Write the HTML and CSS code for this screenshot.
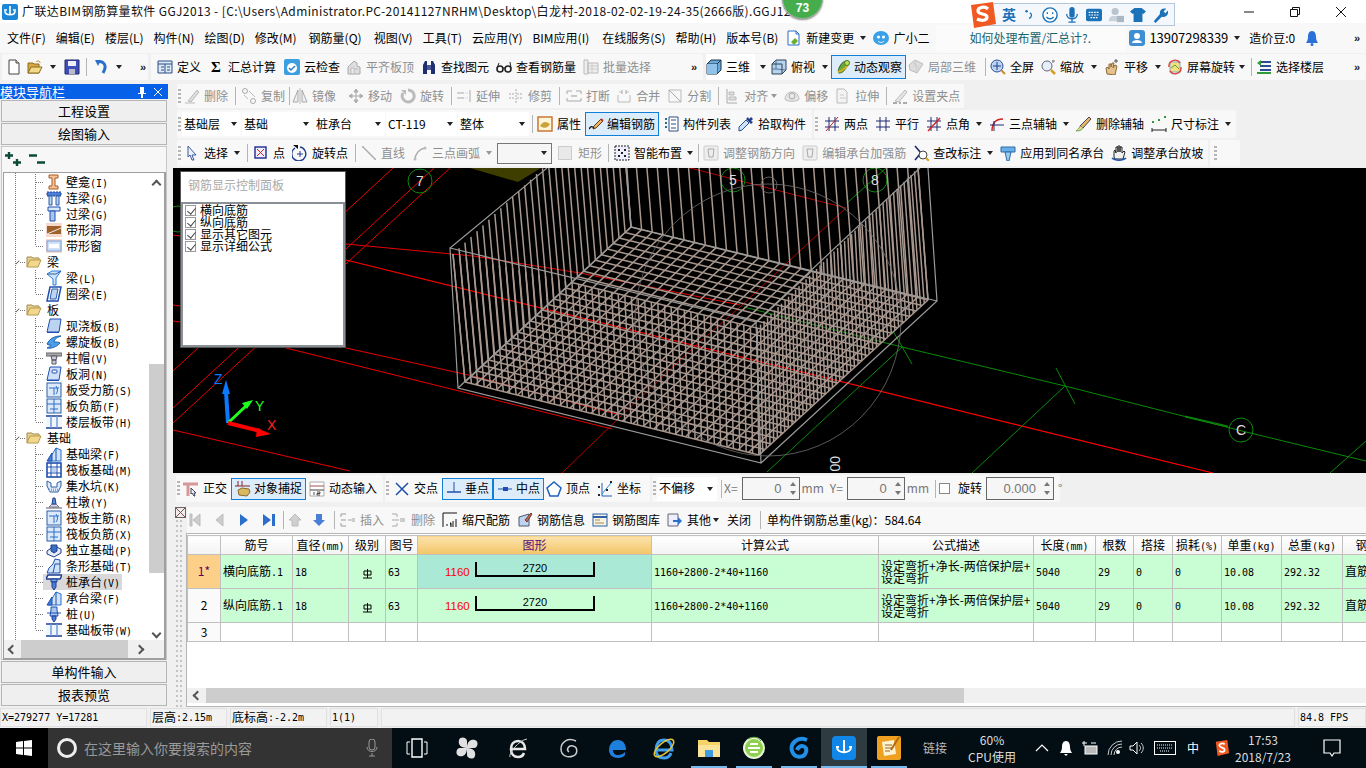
FILE: index.html
```html
<!DOCTYPE html>
<html lang="zh">
<head>
<meta charset="utf-8">
<title>广联达BIM钢筋算量软件</title>
<link rel="stylesheet" href="styles.css">
</head>
<body>
<svg class="defs" aria-hidden="true">
<symbol id="new" viewBox="0 0 16 16"><path d="M3 1h7l3 3v11H3z" fill="#fff" stroke="#444"/><path d="M10 1v3h3" fill="#ddd" stroke="#444"/></symbol>
<symbol id="open" viewBox="0 0 16 16"><path d="M1 14V4h5l1 1h5v9z" fill="#d9a93f" stroke="#8a6a20"/><path d="M1 14l3-6h11l-3 6z" fill="#f3d98a" stroke="#8a6a20"/><path d="M9 3c2-2 4-1 4 1" fill="none" stroke="#c08020"/></symbol>
<symbol id="save" viewBox="0 0 16 16"><path d="M1 1h14v14H1z" fill="#3f4fb8" stroke="#22276e"/><path d="M4 2h8v5H4z" fill="#eef"/><path d="M5 10h6v5H5z" fill="#bbc"/></symbol>
<symbol id="undo" viewBox="0 0 16 16"><path d="M3 3c6-2 11 3 6 11" fill="none" stroke="#2a6fc9" stroke-width="3"/><path d="M1 1l6 0-3 6z" fill="#2a6fc9"/></symbol>
<symbol id="def" viewBox="0 0 16 16"><path d="M1 2h14v12H1z" fill="#dce9f8" stroke="#2b4f85"/><path d="M1 5h14M8 5v9M4 8h3M4 11h3M10 8h3M10 11h3" stroke="#2b4f85"/></symbol>
<symbol id="cloud" viewBox="0 0 16 16"><rect width="16" height="16" rx="2" fill="#3c9fe2"/><circle cx="8" cy="9" r="5" fill="#fff"/><path d="M5 9l2 2 4-4" fill="none" stroke="#2b7cc2" stroke-width="1.5"/></symbol>
<symbol id="flush" viewBox="0 0 16 16"><path d="M2 15V8l6-6 3 2v3l3 1v7z" fill="#ddd" stroke="#aaa"/><path d="M5 9h3v6H5zM9 10h3" fill="#eee" stroke="#bbb"/></symbol>
<symbol id="bino" viewBox="0 0 16 16"><path d="M2 15V6l2-4h2v13zM14 15V6l-2-4h-2v13z" fill="#1d2f70"/><path d="M6 6h4v5H6z" fill="#4a5a98"/></symbol>
<symbol id="glass" viewBox="0 0 16 16"><circle cx="4" cy="10" r="3" fill="none" stroke="#222" stroke-width="1.6"/><circle cx="12" cy="10" r="3" fill="none" stroke="#222" stroke-width="1.6"/><path d="M7 9h2M1 9l2-5M15 9l-1-6" stroke="#222" fill="none"/></symbol>
<symbol id="batch" viewBox="0 0 16 16"><path d="M1 1h4v14H1zM5 4h10v10H5z" fill="#eee" stroke="#bbb"/><path d="M5 7h10M5 10h10M9 4v10" stroke="#ccc"/></symbol>
<symbol id="cube" viewBox="0 0 16 16"><path d="M1 5l4-4h10v10l-4 4H1z" fill="#6aa9d8" stroke="#234"/><path d="M1 5h10v10M11 5l4-4" fill="none" stroke="#234"/><path d="M1 5h10v10H1z" fill="#8fc3ea"/></symbol>
<symbol id="top" viewBox="0 0 16 16"><path d="M1 5l4-4h10v10l-4 4H1z" fill="#b5d3ee" stroke="#345"/><path d="M5 1v9H1M5 10l10 1" fill="none" stroke="#579"/><path d="M1 5h10v10" fill="none" stroke="#345"/></symbol>
<symbol id="orbit" viewBox="0 0 16 16"><ellipse cx="8" cy="8" rx="3" ry="7" transform="rotate(35 8 8)" fill="#6ba83c" stroke="#2d5f1a"/><path d="M3 13C8 12 13 8 14 2" fill="none" stroke="#d8b020" stroke-width="2"/><circle cx="12" cy="4" r="2.500" fill="#c9dd5a" stroke="#4c7a20"/></symbol>
<symbol id="local" viewBox="0 0 16 16"><path d="M1 6l6-5 8 4-6 9-7-3z" fill="#ddd" stroke="#bbb"/><path d="M7 1l2 13M4 3l8 7" stroke="#ccc"/></symbol>
<symbol id="full" viewBox="0 0 16 16"><circle cx="7" cy="7" r="6" fill="#bcd3f2" stroke="#2b4f95"/><path d="M7 3v8M3 7h8" stroke="#1e3f90"/><path d="M11 11l4 4" stroke="#c58c30" stroke-width="2"/></symbol>
<symbol id="zoom" viewBox="0 0 16 16"><circle cx="7" cy="7" r="5" fill="#e6f0fa" stroke="#667"/><path d="M11 11l4 4" stroke="#d5a020" stroke-width="2.500"/><path d="M13 1v3M12 2h3" stroke="#777"/></symbol>
<symbol id="pan" viewBox="0 0 16 16"><path d="M3 15L2 9l2-1 1 2V5h2v3l1-4h2l-1 5 2-3 2 1-2 9z" fill="#e4c08a" stroke="#8a6a3a"/><path d="M12 0v4M10 2h4" stroke="#555"/></symbol>
<symbol id="rot" viewBox="0 0 16 16"><rect x="3" y="3" width="10" height="10" fill="#f3e080" stroke="#7bb0d8"/><path d="M4 9l4-3 4 4" fill="none" stroke="#5aa040"/><path d="M2 8a6 6 0 0 1 11-4M14 8a6 6 0 0 1-11 4" fill="none" stroke="#e0403a" stroke-width="1.400"/></symbol>
<symbol id="layer" viewBox="0 0 16 16"><path d="M4 3h11M4 7h11M4 11h11" stroke="#2b4f95" stroke-width="2"/><path d="M1 14h14" stroke="#2f9a3a" stroke-width="2"/><path d="M5 1L1 4l4 3z" fill="#2f9a3a"/></symbol>
<symbol id="del" viewBox="0 0 16 16"><path d="M4 13L13 2l2 2-8 10z" fill="#ddd" stroke="#bbb"/><path d="M1 15h10" stroke="#bbb"/></symbol>
<symbol id="copy" viewBox="0 0 16 16"><circle cx="4" cy="3" r="2.500" fill="none" stroke="#aaa"/><circle cx="12" cy="13" r="2.500" fill="none" stroke="#aaa"/><path d="M3 7l4 4M8 3l6 6" stroke="#bbb"/></symbol>
<symbol id="mirror" viewBox="0 0 16 16"><path d="M6 2v12H1zM10 2v12h5z" fill="#eee" stroke="#aaa"/><path d="M8 0v16" stroke="#bbb"/></symbol>
<symbol id="move" viewBox="0 0 16 16"><path d="M8 1v14M1 8h14M8 1L6 4h4zM8 15l-2-3h4zM1 8l3-2v4zM15 8l-3-2v4z" fill="#bbb" stroke="#aaa"/></symbol>
<symbol id="turn" viewBox="0 0 16 16"><path d="M8 2a6 6 0 1 1-5 3" fill="none" stroke="#bbb" stroke-width="3"/><path d="M1 2h5v5z" fill="#bbb"/></symbol>
<symbol id="ext" viewBox="0 0 16 16"><path d="M1 5h7M1 10h7M14 2v12" stroke="#aaa"/><path d="M9 5h4M9 10h4" stroke="#ccc" stroke-dasharray="1 1"/></symbol>
<symbol id="trim" viewBox="0 0 16 16"><path d="M8 1v14M1 6h6M1 10h6M9 6h6M9 10h6" stroke="#aaa" stroke-dasharray="2 1"/></symbol>
<symbol id="brk" viewBox="0 0 16 16"><path d="M1 3h5M10 3h5M1 13h14M1 3v3M15 3v3M1 10v3M15 10v3" stroke="#aaa"/><path d="M5 8h6" stroke="#999"/></symbol>
<symbol id="mrg" viewBox="0 0 16 16"><path d="M2 7v7h12V7M3 4h3M10 4h3" fill="none" stroke="#bbb"/><path d="M6 2v4M10 2v4" stroke="#aaa"/></symbol>
<symbol id="spl" viewBox="0 0 16 16"><path d="M2 2h12v12H2z" fill="none" stroke="#bbb"/><path d="M2 2l12 12" stroke="#aaa"/></symbol>
<symbol id="aln" viewBox="0 0 16 16"><path d="M3 1v14h10" fill="none" stroke="#aaa"/><path d="M5 4h5v3H5zM5 9h7v3H5z" fill="#ddd" stroke="#bbb"/></symbol>
<symbol id="ofs" viewBox="0 0 16 16"><path d="M1 11a7 7 0 0 1 14 0c0 3-14 3-14 0z" fill="#e6e6e6" stroke="#bbb"/><circle cx="8" cy="8" r="3" fill="none" stroke="#aaa"/></symbol>
<symbol id="str" viewBox="0 0 16 16"><path d="M2 1h7l3 3v11H2z" fill="#f3f3f3" stroke="#bbb"/><path d="M5 7h4M5 10h6" stroke="#ccc"/></symbol>
<symbol id="change" viewBox="0 0 16 16"><path d="M2 1h8l3 3v11H2z" fill="#fff" stroke="#2b6fc9"/><path d="M10 1v3h3" fill="none" stroke="#2b6fc9"/><path d="M5 12l4-4 3 3-4 4z" fill="#6ab02e"/></symbol>
<symbol id="grip2" viewBox="0 0 16 16"><path d="M3 13L13 2l2 2-8 10z" fill="#e4e4e4" stroke="#bbb"/><path d="M1 15h4M7 15h2M11 15h4" stroke="#aaa" stroke-width="2"/></symbol>
<symbol id="attr" viewBox="0 0 16 16"><rect x="1" y="1" width="14" height="14" fill="#fff5d8" stroke="#c66e2a" stroke-width="1.400"/><path d="M3 10c3-5 6-5 10-2-2 4-6 5-10 2z" fill="#cda23b"/></symbol>
<symbol id="edit" viewBox="0 0 16 16"><path d="M5 10L12 3l2 2-7 7-3 1z" fill="#e8b860" stroke="#6a3a1a"/><path d="M12 3l2 2" stroke="#c03030" stroke-width="2"/><path d="M0 13c2-3 3-3 5-1" fill="none" stroke="#111" stroke-width="1.400"/></symbol>
<symbol id="list" viewBox="0 0 16 16"><path d="M6 1h9v14H6z" fill="#fff" stroke="#2b4f85"/><path d="M8 4h5M8 8h5M8 12h5" stroke="#2b4f85"/><path d="M2 3h2M2 7h2M2 11h2" stroke="#2b6f85" stroke-width="2" stroke-dasharray="2 1"/></symbol>
<symbol id="pick" viewBox="0 0 16 16"><path d="M1 15l3-1 7-7-3-3-7 7z" fill="#cfe4fa" stroke="#2b4f95"/><path d="M8 3l5 5 2-2-2-1 2-2-2-2-2 2-1-2z" fill="#233c86"/></symbol>
<symbol id="two" viewBox="0 0 16 16"><path d="M1 5h14M1 11h14M5 1v14M11 1v14" stroke="#1e2a70"/><path d="M2 15L14 1" stroke="#d02020"/></symbol>
<symbol id="par" viewBox="0 0 16 16"><path d="M1 5h14M1 11h14M5 1v14M11 1v14" stroke="#1e2a70"/></symbol>
<symbol id="ang" viewBox="0 0 16 16"><path d="M1 5h14M1 11h14M5 1v14M11 1v14" stroke="#1e2a70"/><path d="M2 15L14 2" stroke="#d02020" stroke-width="1.400"/></symbol>
<symbol id="arc3" viewBox="0 0 16 16"><path d="M3 15c0-8 4-12 11-12" fill="none" stroke="#d02020" stroke-width="1.400"/><path d="M1 9h14M5 5v10" stroke="#1e2a70"/></symbol>
<symbol id="delax" viewBox="0 0 16 16"><path d="M4 10L13 1l2 2-8 9z" fill="#e8b860" stroke="#445"/><path d="M4 10c-1 3-2 3-4 5 4 0 6-1 7-3" fill="#f0d090" stroke="#6a5"/></symbol>
<symbol id="dim" viewBox="0 0 16 16"><path d="M1 12v4M15 12v4M1 14h14" stroke="#222"/><rect x="1" y="5" width="2" height="2" fill="#2f9a3a"/><rect x="7" y="3" width="2" height="2" fill="#2f9a3a"/><rect x="13" y="0" width="2" height="2" fill="#2f9a3a"/></symbol>
<symbol id="arrow" viewBox="0 0 16 16"><path d="M4 1l8 9H8l2 5-2 0-2-5-2 2z" fill="#eef3ff" stroke="#3a5a9a"/></symbol>
<symbol id="pt" viewBox="0 0 16 16"><rect x="2" y="2" width="11" height="11" fill="#eef" stroke="#1e2a90" stroke-width="1.400"/><path d="M4 4l7 7M11 4l-7 7" stroke="#d02020"/></symbol>
<symbol id="rpt" viewBox="0 0 16 16"><path d="M3 3a7 7 0 1 0 5-1" fill="none" stroke="#1e3f90" stroke-width="1.400"/><path d="M1 0h5v4z" fill="#111"/><path d="M8 6v6M5 9h6" stroke="#1e3f90"/></symbol>
<symbol id="ln" viewBox="0 0 16 16"><path d="M2 2l12 12" stroke="#aaa" stroke-width="1.400"/><path d="M1 1h2v2H1zM13 13h2v2h-2z" fill="#bbb"/></symbol>
<symbol id="arc" viewBox="0 0 16 16"><path d="M3 15c0-6 4-11 10-12" fill="none" stroke="#aaa" stroke-width="1.500"/><circle cx="3" cy="14" r="1.500" fill="#bbb"/><circle cx="13" cy="3" r="1.500" fill="#bbb"/></symbol>
<symbol id="smart" viewBox="0 0 16 16"><rect x="1" y="1" width="14" height="14" fill="#eef" stroke="#222" stroke-dasharray="2 1"/><path d="M4 4h2v2H4zM10 4h2v2h-2zM7 7h2v2H7zM4 10h2v2H4zM10 10h2v2h-2z" fill="#222"/></symbol>
<symbol id="adj" viewBox="0 0 16 16"><rect x="1" y="1" width="14" height="14" rx="1" fill="#eee" stroke="#ccc"/><path d="M5 4h6l-1 8H6z" fill="none" stroke="#aaa"/></symbol>
<symbol id="qry" viewBox="0 0 16 16"><path d="M2 1l6 7M2 15l5-6" stroke="#1e2a70" stroke-width="1.600"/><circle cx="10" cy="10" r="4" fill="#fff" stroke="#444"/><path d="M13 13l3 3" stroke="#d5a020" stroke-width="2"/></symbol>
<symbol id="app" viewBox="0 0 16 16"><path d="M1 2h14v5H1z" fill="#6ab0e6" stroke="#2b6aa8"/><path d="M5 7h6l-2 9H7z" fill="#9accf0" stroke="#2b6aa8"/></symbol>
<symbol id="hand" viewBox="0 0 16 16"><path d="M3 12V6l1-1 1 3V2h2v5V1h2v6V2h2v6l2-2 1 1-2 7H4z" fill="#f0f0f0" stroke="#222"/><path d="M1 13c3 3 11 3 14 0" fill="none" stroke="#1e4fb0" stroke-width="1.500"/></symbol>
<symbol id="orth" viewBox="0 0 16 16"><path d="M0 3h15M5 3v12" stroke="#d89898" stroke-width="3"/><path d="M8 7l5 5-2 0 1 3-1 0-2-3-1 1z" fill="#eef" stroke="#445"/></symbol>
<symbol id="snap" viewBox="0 0 16 16"><path d="M0 5h15M7 0v5M3 0v5" stroke="#8a2020"/><path d="M4 14l-1-5 4-2 7 1 1 3-3 4z" fill="#d8b860" stroke="#8a6a2a"/></symbol>
<symbol id="dyn" viewBox="0 0 16 16"><path d="M1 1h14v14H1z" fill="#fff" stroke="#aaa"/><path d="M1 5h14" stroke="#a05050"/><path d="M1 9h14" stroke="#444"/><path d="M5 11v3M8 11h3v1.500H8V14h3" stroke="#222" fill="none" stroke-width=".8"/></symbol>
<symbol id="xp" viewBox="0 0 16 16"><path d="M2 2l12 12M14 2L2 14" stroke="#1e4fb0" stroke-width="1.500"/></symbol>
<symbol id="perp" viewBox="0 0 16 16"><path d="M1 11h14" stroke="#1e4fb0" stroke-width="1.500"/><path d="M8 1v10" stroke="#1e4fb0"/></symbol>
<symbol id="mid" viewBox="0 0 16 16"><path d="M1 8h14" stroke="#1e4fb0"/><rect x="6" y="6" width="5" height="4" fill="#1e4fb0"/></symbol>
<symbol id="vtx" viewBox="0 0 16 16"><path d="M8 1l7 6-3 8H4L1 7z" fill="#fff" stroke="#1e5fc0" stroke-width="1.500"/></symbol>
<symbol id="crd" viewBox="0 0 16 16"><path d="M5 2v13h10" fill="none" stroke="#1e5fc0"/><path d="M5 13L14 2" stroke="#2a8fd0"/><path d="M1 5h2v2H1zM13 0h2v2h-2zM1 13h2v2H1zM9 8h2v2H9z" fill="#223"/></symbol>
<symbol id="first" viewBox="0 0 16 16"><path d="M3 2h2v12H3zM13 2v12L6 8z" fill="#ccc" stroke="#bbb"/></symbol>
<symbol id="prev" viewBox="0 0 16 16"><path d="M12 2v12L5 8z" fill="#ccc" stroke="#bbb"/></symbol>
<symbol id="next" viewBox="0 0 16 16"><path d="M4 2v12l8-6z" fill="#2a6fc9"/></symbol>
<symbol id="last" viewBox="0 0 16 16"><path d="M2 2v12l8-6zM11 2h3v12h-3z" fill="#2a6fc9"/></symbol>
<symbol id="up" viewBox="0 0 16 16"><path d="M8 2l6 6h-3v6H5V8H2z" fill="#d0d0d0" stroke="#bbb"/></symbol>
<symbol id="down" viewBox="0 0 16 16"><path d="M8 14l6-6h-3V2H5v6H2z" fill="#4a7fd8"/></symbol>
<symbol id="ins" viewBox="0 0 16 16"><path d="M1 2h5M1 8h5M1 14h5M1 2v3M1 11v3" stroke="#999"/><path d="M8 8h7" stroke="#aaa"/><rect x="12" y="6" width="3" height="4" fill="#ccc"/></symbol>
<symbol id="dlr" viewBox="0 0 16 16"><path d="M1 2h5M1 8h7M1 14h5M6 2v3M6 11v3" stroke="#aaa"/><rect x="9" y="6" width="5" height="4" fill="#ccc"/></symbol>
<symbol id="scale" viewBox="0 0 16 16"><path d="M1 1v14M4 13h2M8 11h1v4M11 9v6M14 7v8M1 1h14" stroke="#111"/></symbol>
<symbol id="info" viewBox="0 0 16 16"><path d="M2 14V5l10-3v12z" fill="#bcd3f2" stroke="#556"/><path d="M8 8l6-7 1 1-5 8z" fill="#d06050" stroke="#643"/></symbol>
<symbol id="lib" viewBox="0 0 16 16"><rect x="1" y="2" width="14" height="12" fill="#f6f3e0" stroke="#2b5fa8"/><path d="M1 5h14" stroke="#2b5fa8" stroke-width="2"/><path d="M3 8h5M3 11h9" stroke="#a85"/></symbol>
<symbol id="oth" viewBox="0 0 16 16"><path d="M1 2h10v12H1z" fill="#eef" stroke="#667"/><path d="M6 8h5V5l4 4-4 4v-3H6z" fill="#2a6fc9"/></symbol>
<symbol id="fold" viewBox="0 0 16 16"><path d="M1 13V3h5l1 1h6v2" fill="#e9cf90" stroke="#a58a4a"/><path d="M1 13l3-7h11l-3 7z" fill="#f1d88b" stroke="#b59a50"/></symbol>
<symbol id="tA" viewBox="0 0 16 16"><path d="M3 1h9v3H9v8h3v3H3v-3h3V4H3z" fill="#f5c49a" stroke="#a85a20"/></symbol>
<symbol id="tB" viewBox="0 0 16 16"><path d="M1 2h14v4H1z" fill="#4a7fd8" stroke="#1e3f90" stroke-dasharray="2 1"/><path d="M3 6h3v9H3zM10 6h3v9h-3z" fill="#bcd3f2" stroke="#2b5fa8"/></symbol>
<symbol id="tC" viewBox="0 0 16 16"><path d="M2 1h12v4H2z" fill="#dce9f8" stroke="#1e4fb0"/><path d="M4 5h5v10H4z" fill="#a9c7ee" stroke="#1e4fb0"/></symbol>
<symbol id="tD" viewBox="0 0 16 16"><rect y="1" width="16" height="14" fill="#f7d8cc"/><rect x="1" y="4" width="14" height="8" fill="#a0602a"/><path d="M1 12l14-6" stroke="#eee"/></symbol>
<symbol id="tE" viewBox="0 0 16 16"><rect y="1" width="16" height="14" fill="#f7d8cc"/><rect x="1" y="3" width="14" height="10" fill="#cfe0fa" stroke="#7a9fd8"/><rect x="3" y="6" width="10" height="4" fill="#fff"/></symbol>
<symbol id="tF" viewBox="0 0 16 16"><path d="M1 4l6 5v6h3V8l5-7H6z" fill="#cfe4fa" stroke="#2b7fd8"/><path d="M1 4h9l5-3" fill="none" stroke="#2b5fa8"/></symbol>
<symbol id="tG" viewBox="0 0 16 16"><path d="M4 1h11l-3 14H1z" fill="#fff" stroke="#1e4fb0" stroke-width="1.500"/><path d="M6 3h6l-2 10H4z" fill="#bcd3f2" stroke="#2b5fa8"/></symbol>
<symbol id="tH" viewBox="0 0 16 16"><path d="M4 1h11l-2 13H1z" fill="#bcd3f2" stroke="#1e4fb0"/><path d="M1 14h12v1H1z" fill="#1e4fb0"/></symbol>
<symbol id="tI" viewBox="0 0 16 16"><path d="M1 10c3-6 8-8 14-8-3 1-7 3-7 6 3 0 5 0 6 1-3 4-10 6-13 5 2-1 4-2 4-3-1 0-3 0-4-1z" fill="#4a9fe8" stroke="#1e5fb0"/></symbol>
<symbol id="tJ" viewBox="0 0 16 16"><path d="M0 3h16v3H0z" fill="#aaa" stroke="#666"/><path d="M5 6h6l-1 4H6zM6 10h4v4H6z" fill="#ccd" stroke="#556"/></symbol>
<symbol id="tK" viewBox="0 0 16 16"><path d="M4 1h11l-2 13H1z" fill="#cfe0fa" stroke="#1e4fb0"/><rect x="6" y="4" width="5" height="3" rx="1" fill="#fff" stroke="#1e4fb0"/><path d="M1 14h12v1H1z" fill="#1e4fb0"/></symbol>
<symbol id="tL" viewBox="0 0 16 16"><rect x="1" y="1" width="14" height="14" fill="#dce9f8" stroke="#2b5fa8"/><path d="M3 6h10M8 6v7" stroke="#2b6fc9"/><path d="M10 4c2 2 2 6 0 8" fill="none" stroke="#2b6fc9"/></symbol>
<symbol id="tM" viewBox="0 0 16 16"><rect x="1" y="1" width="14" height="14" fill="#dce9f8" stroke="#2b5fa8"/><path d="M1 6h14M8 1v14M4 11h8" stroke="#2b6fc9"/></symbol>
<symbol id="tN" viewBox="0 0 16 16"><path d="M0 2h16M0 14h16" stroke="#1e3f90" stroke-width="1.600"/><path d="M5 2v12M11 2v12" stroke="#5a8fd8" stroke-width="2"/><rect x="0" y="3" width="16" height="10" fill="#dce9f8" opacity=".4"/></symbol>
<symbol id="tO" viewBox="0 0 16 16"><path d="M2 15L10 2l5 2v11z" fill="#cfe4fa" stroke="#2b6fc9"/><path d="M1 15l5-8v8zM10 2v13" stroke="#1e4fb0" fill="#4a7fd8"/></symbol>
<symbol id="tP" viewBox="0 0 16 16"><rect x="1" y="1" width="14" height="14" fill="#fff" stroke="#1e4fb0" stroke-width="1.600"/><path d="M5 1v14M11 1v14M1 5h14M1 11h14" stroke="#1e4fb0"/><rect x="6" y="6" width="4" height="4" fill="#bcd3f2"/></symbol>
<symbol id="tQ" viewBox="0 0 16 16"><path d="M1 3l4 2v4h6V5l4-2v5l-3 6H4L1 8z" fill="#e0ebf8" stroke="#2b5fa8"/><path d="M3 12h10" stroke="#8ab" stroke-dasharray="1 1" stroke-width="3"/></symbol>
<symbol id="tR" viewBox="0 0 16 16"><path d="M0 13h16v2H0z" fill="#aab"/><path d="M3 13l3-3h4l3 3z" fill="#dde" stroke="#778"/><path d="M6 10l1-6h2l1 6z" fill="#5a8fd8" stroke="#1e3f90"/></symbol>
<symbol id="tS" viewBox="0 0 16 16"><path d="M1 9l7-5 7 3v4l-7 4-7-3z" fill="#e6ecf5" stroke="#1e3f90"/><path d="M5 3h6v6l-3 2-3-2z" fill="#3a6fc0" stroke="#1e3f90"/></symbol>
<symbol id="tT" viewBox="0 0 16 16"><path d="M1 15l2-5 4-4 2-5 5 1v13z" fill="#cfe4fa" stroke="#1e4fb0"/><path d="M7 15l2-9h5" fill="none" stroke="#1e4fb0"/></symbol>
<symbol id="tU" viewBox="0 0 16 16"><path d="M2 1h14l-2 4H0z" fill="#fff" stroke="#1e3f90" stroke-width="1.500"/><path d="M5 5h6v3H5z" fill="#6a9fe0" stroke="#1e3f90"/><path d="M6 8h4v5l-2 3-2-3z" fill="#4a7fd8" stroke="#1e3f90"/></symbol>
<symbol id="tV" viewBox="0 0 16 16"><path d="M5 1h6v3l1 6H4l1-6z" fill="#a9c7ee" stroke="#1e4fb0"/><path d="M6 10h4v3l-2 3-2-3z" fill="#4a7fd8" stroke="#1e3f90"/><path d="M1 7h14" stroke="#1e4fb0"/></symbol>
</svg>

<div class="app">
  <header class="title">
    <svg class="logo" viewBox="0 0 16 16"><rect width="16" height="16" rx="2" fill="#1b86d8"/><path d="M8 2v9M3 7c0 5 10 5 10 0M2 6l3 0M11 6l3 0" fill="none" stroke="#fff" stroke-width="1.600"/></svg>
    <span class="title-text">广联达BIM钢筋算量软件 GGJ2013 - [C:\Users\Administrator.PC-20141127NRHM\Desktop\白龙村-2018-02-02-19-24-35(2666版).GGJ12</span>
    <div class="winbtns">
      <svg class="wb" viewBox="0 0 12 12"><path d="M1 6h10" stroke="#111"/></svg>
      <svg class="wb" viewBox="0 0 12 12"><path d="M1.500 3.500h7v7h-7zM3.500 3.500v-2h7v7h-2" fill="none" stroke="#111"/></svg>
      <svg class="wb" viewBox="0 0 12 12"><path d="M1 1l10 10M11 1L1 11" stroke="#111"/></svg>
    </div>
    <div class="badge">73</div>
    <div class="ime">
      <svg class="ime-s" viewBox="0 0 28 26"><path d="M3 3l22-3 3 22-22 4z" fill="#f05a22"/><path d="M20 7c-3-3-10-2-10 2 0 4 9 2 9 6s-6 4-10 2" fill="none" stroke="#fff" stroke-width="3.200"/></svg>
      <span class="ime-en">英</span>
      <svg class="ime-i1" viewBox="0 0 10 12"><circle cx="2" cy="2" r="1.600" fill="#1b72b8"/><path d="M6 4c3 1 3 5-1 7" fill="none" stroke="#1b72b8" stroke-width="1.600"/></svg>
      <svg class="ime-i" viewBox="0 0 18 18"><circle cx="9" cy="9" r="8" fill="#fff" stroke="#1b72b8" stroke-width="1.600"/><path d="M6 6v2M12 6v2M5 11c2 3 6 3 8 0" fill="none" stroke="#1b72b8" stroke-width="1.500"/></svg>
      <svg class="ime-i" viewBox="0 0 18 18"><rect x="6" y="0" width="6" height="12" rx="3" fill="#1b72b8"/><path d="M3 8c0 7 12 7 12 0M9 14v3M5 17h8" fill="none" stroke="#1b72b8" stroke-width="1.500"/></svg>
      <svg class="ime-i" viewBox="0 0 18 18"><rect y="2" width="18" height="14" rx="2" fill="#1b72b8"/><path d="M3 6h12M3 9h12M5 12h8" stroke="#fff" stroke-dasharray="2 1" stroke-width="1.400"/></svg>
      <svg class="ime-i" viewBox="0 0 18 18"><circle cx="8" cy="5" r="4" fill="#b8c4d0"/><path d="M1 16c0-6 3-6 7-6s5 2 5 6z" fill="#c8d2dc"/><rect x="10" y="10" width="8" height="7" fill="#aab8c6"/></svg>
      <svg class="ime-i" viewBox="0 0 18 18"><path d="M5 1h8l5 4-3 3-1-1v10H4V7L3 8 0 5z" fill="#1b72b8"/></svg>
      <svg class="ime-i" viewBox="0 0 18 18"><path d="M2 16l7-8c-1-4 2-7 7-6l-3 3 2 2 3-3c1 5-3 8-7 7l-7 7z" fill="#1b72b8"/></svg>
    </div>
  </header>

  <nav class="menu">
    <span class="mi">文件(F)</span><span class="mi">编辑(E)</span><span class="mi">楼层(L)</span><span class="mi">构件(N)</span><span class="mi">绘图(D)</span><span class="mi mr12">修改(M)</span><span class="mi mr12">钢筋量(Q)</span><span class="mi">视图(V)</span><span class="mi">工具(T)</span><span class="mi">云应用(Y)</span><span class="mi mr13">BIM应用(I)</span><span class="mi">在线服务(S)</span><span class="mi">帮助(H)</span><span class="mi mr8">版本号(B)</span>
    <span class="t"><svg class="i"><use href="#change"/></svg><span>新建变更</span></span><i class="c m6"></i>
    <span class="t m7"><svg class="i" viewBox="0 0 16 16"><ellipse cx="8" cy="8" rx="8" ry="7" fill="#3aa0e8"/><circle cx="5.500" cy="7" r="1.600" fill="#fff"/><circle cx="10.500" cy="7" r="1.600" fill="#fff"/><path d="M5 11c2 2 4 2 6 0" stroke="#fff" fill="none"/></svg><span>广小二</span></span>
    <div class="ask">如何处理布置/汇总计?.</div>
    <svg class="i user" viewBox="0 0 16 16"><rect width="16" height="16" rx="3" fill="#3d8fd1"/><circle cx="8" cy="6" r="3" fill="#fff"/><path d="M3 13c0-4 10-4 10 0z" fill="#fff"/></svg>
    <span class="phone">13907298339</span><i class="c m6"></i><span class="m9">造价豆:0</span>
    <svg class="i m9" viewBox="0 0 16 16"><path d="M8 1c-3 0-4 3-4 6 0 3-1 4-2 6h12c-1-2-2-3-2-6 0-3-1-6-4-6z" fill="#2b6fd8"/><circle cx="8" cy="14.500" r="1.500" fill="#2b6fd8"/></svg>
    <span class="more end">»</span>
  </nav>

  <div class="row1">
    <div class="grp g1">
      <svg class="i"><use href="#new"/></svg><svg class="i m5"><use href="#open"/></svg><i class="c m7"></i><svg class="i m8"><use href="#save"/></svg><i class="sep m6"></i><svg class="i m7"><use href="#undo"/></svg><i class="c m6"></i><span class="more m18">»</span>
    </div>
    <div class="grp g2">
      <span class="t"><svg class="i"><use href="#def"/></svg><span>定义</span></span>
      <span class="t m7"><span class="sigma">Σ</span><span>汇总计算</span></span>
      <span class="t m8"><svg class="i"><use href="#cloud"/></svg><span>云检查</span></span>
      <span class="t m6 off"><svg class="i"><use href="#flush"/></svg><span>平齐板顶</span></span>
      <span class="t m7"><svg class="i"><use href="#bino"/></svg><span>查找图元</span></span>
      <span class="t m7"><svg class="i"><use href="#glass"/></svg><span>查看钢筋量</span></span>
      <span class="t m7 off"><svg class="i"><use href="#batch"/></svg><span>批量选择</span></span>
      <span class="more push">»</span>
    </div>
    <div class="grp g3">
      <span class="white3d"><span class="t"><svg class="i"><use href="#cube"/></svg><span>三维</span></span></span><i class="c m5"></i>
      <span class="t m5"><svg class="i"><use href="#top"/></svg><span>俯视</span></span><i class="c m7"></i>
      <span class="t hl hl1 m3"><svg class="i"><use href="#orbit"/></svg><span>动态观察</span></span>
      <span class="t off m2"><svg class="i"><use href="#local"/></svg><span>局部三维</span></span>
      <i class="sep m9"></i>
      <span class="t m4"><svg class="i"><use href="#full"/></svg><span>全屏</span></span>
      <span class="t m6"><svg class="i"><use href="#zoom"/></svg><span>缩放</span></span><i class="c m7"></i>
      <span class="t m7"><svg class="i"><use href="#pan"/></svg><span>平移</span></span><i class="c m7"></i>
      <span class="t m6"><svg class="i"><use href="#rot"/></svg><span>屏幕旋转</span></span><i class="c m4"></i>
      <i class="sep m6"></i>
      <span class="t m4"><svg class="i"><use href="#layer"/></svg><span>选择楼层</span></span>
      <span class="more push">»</span>
    </div>
  </div>

  <div class="main">
    <aside class="side">
      <div class="side-head"><span>模块导航栏</span><span class="pin">
        <svg class="pinpic" viewBox="0 0 10 12"><path d="M3 1h4v6h2v1H6v4H4V8H1V7h2z" fill="#fff"/></svg>
        <svg class="pinpic" viewBox="0 0 10 12"><path d="M1 2l8 8M9 2l-8 8" stroke="#fff"/></svg></span></div>
      <div class="side-btn">工程设置</div>
      <div class="side-btn">绘图输入</div>
      <div class="navbox">
        <div class="expand">
          <svg class="ex" viewBox="0 0 16 16"><path d="M4 1v7M0 4.500h8M12 8v7M8 11.500h8" stroke="#0c4a3a" stroke-width="2.400"/></svg>
          <svg class="ex" viewBox="0 0 16 16"><path d="M0 4.500h8M8 11.500h8" stroke="#0c4a3a" stroke-width="2.400"/></svg>
        </div>
        <div class="treebox">
          <div class="treeclip">
            <ul class="lv1">
              <li><ul class="lv2">
                <li><span class="dash"></span><span class="item"><svg class="i"><use href="#tA"/></svg><span>壁龛<i>(I)</i></span></span></li>
                <li><span class="dash"></span><span class="item"><svg class="i"><use href="#tB"/></svg><span>连梁<i>(G)</i></span></span></li>
                <li><span class="dash"></span><span class="item"><svg class="i"><use href="#tC"/></svg><span>过梁<i>(G)</i></span></span></li>
                <li><span class="dash"></span><span class="item"><svg class="i"><use href="#tD"/></svg><span>带形洞</span></span></li>
                <li><span class="dash"></span><span class="item"><svg class="i"><use href="#tE"/></svg><span>带形窗</span></span></li>
              </ul></li>
              <li class="fo"><i class="cv"></i><span class="dash2"></span><svg class="i"><use href="#fold"/></svg><span>梁</span></li>
              <li><ul class="lv2">
                <li><span class="dash"></span><span class="item"><svg class="i"><use href="#tF"/></svg><span>梁<i>(L)</i></span></span></li>
                <li><span class="dash"></span><span class="item"><svg class="i"><use href="#tG"/></svg><span>圈梁<i>(E)</i></span></span></li>
              </ul></li>
              <li class="fo"><i class="cv"></i><span class="dash2"></span><svg class="i"><use href="#fold"/></svg><span>板</span></li>
              <li><ul class="lv2">
                <li><span class="dash"></span><span class="item"><svg class="i"><use href="#tH"/></svg><span>现浇板<i>(B)</i></span></span></li>
                <li><span class="dash"></span><span class="item"><svg class="i"><use href="#tI"/></svg><span>螺旋板<i>(B)</i></span></span></li>
                <li><span class="dash"></span><span class="item"><svg class="i"><use href="#tJ"/></svg><span>柱帽<i>(V)</i></span></span></li>
                <li><span class="dash"></span><span class="item"><svg class="i"><use href="#tK"/></svg><span>板洞<i>(N)</i></span></span></li>
                <li><span class="dash"></span><span class="item"><svg class="i"><use href="#tL"/></svg><span>板受力筋<i>(S)</i></span></span></li>
                <li><span class="dash"></span><span class="item"><svg class="i"><use href="#tM"/></svg><span>板负筋<i>(F)</i></span></span></li>
                <li><span class="dash"></span><span class="item"><svg class="i"><use href="#tN"/></svg><span>楼层板带<i>(H)</i></span></span></li>
              </ul></li>
              <li class="fo"><i class="cv"></i><span class="dash2"></span><svg class="i"><use href="#fold"/></svg><span>基础</span></li>
              <li><ul class="lv2">
                <li><span class="dash"></span><span class="item"><svg class="i"><use href="#tO"/></svg><span>基础梁<i>(F)</i></span></span></li>
                <li><span class="dash"></span><span class="item"><svg class="i"><use href="#tP"/></svg><span>筏板基础<i>(M)</i></span></span></li>
                <li><span class="dash"></span><span class="item"><svg class="i"><use href="#tQ"/></svg><span>集水坑<i>(K)</i></span></span></li>
                <li><span class="dash"></span><span class="item"><svg class="i"><use href="#tR"/></svg><span>柱墩<i>(Y)</i></span></span></li>
                <li><span class="dash"></span><span class="item"><svg class="i"><use href="#tL"/></svg><span>筏板主筋<i>(R)</i></span></span></li>
                <li><span class="dash"></span><span class="item"><svg class="i"><use href="#tM"/></svg><span>筏板负筋<i>(X)</i></span></span></li>
                <li><span class="dash"></span><span class="item"><svg class="i"><use href="#tS"/></svg><span>独立基础<i>(P)</i></span></span></li>
                <li><span class="dash"></span><span class="item"><svg class="i"><use href="#tT"/></svg><span>条形基础<i>(T)</i></span></span></li>
                <li><span class="dash"></span><span class="item sel"><svg class="i"><use href="#tU"/></svg><span>桩承台<i>(V)</i></span></span></li>
                <li><span class="dash"></span><span class="item"><svg class="i"><use href="#tO"/></svg><span>承台梁<i>(F)</i></span></span></li>
                <li><span class="dash"></span><span class="item"><svg class="i"><use href="#tV"/></svg><span>桩<i>(U)</i></span></span></li>
                <li><span class="dash"></span><span class="item"><svg class="i"><use href="#tN"/></svg><span>基础板带<i>(W)</i></span></span></li>
              </ul></li>
            </ul>
            <div class="vbar">
              <i class="arrow-up"></i>
              <div class="vtrack"><div class="vthumb"></div></div>
              <i class="arrow-dn"></i>
            </div>
          </div>
          <div class="hbar"><i class="arrow-l"></i><div class="hthumb"></div><i class="arrow-r"></i></div>
        </div>
      </div>
      <div class="side-btn">单构件输入</div>
      <div class="side-btn">报表预览</div>
    </aside>

    <section class="work">
      <div class="tbar r2">
        <div class="grp g21">
          <i class="grip"></i>
          <span class="t off m3"><svg class="i"><use href="#del"/></svg><span>删除</span></span><i class="sep m7"></i>
          <span class="t off m5"><svg class="i"><use href="#copy"/></svg><span>复制</span></span><i class="sep m4"></i>
          <span class="t off m2"><svg class="i"><use href="#mirror"/></svg><span>镜像</span></span>
          <span class="t off m12"><svg class="i"><use href="#move"/></svg><span>移动</span></span>
          <span class="t off m8"><svg class="i"><use href="#turn"/></svg><span>旋转</span></span><i class="sep m7"></i>
          <span class="t off m4"><svg class="i"><use href="#ext"/></svg><span>延伸</span></span>
          <span class="t off m8"><svg class="i"><use href="#trim"/></svg><span>修剪</span></span><i class="sep m7"></i>
          <span class="t off m6"><svg class="i"><use href="#brk"/></svg><span>打断</span></span>
          <span class="t off m6"><svg class="i"><use href="#mrg"/></svg><span>合并</span></span>
          <span class="t off m7"><svg class="i"><use href="#spl"/></svg><span>分割</span></span><i class="sep m7"></i>
          <span class="t off m5"><svg class="i"><use href="#aln"/></svg><span>对齐</span></span><i class="c m3 gray"></i>
          <span class="t off m7"><svg class="i"><use href="#ofs"/></svg><span>偏移</span></span>
          <span class="t off m7"><svg class="i"><use href="#str"/></svg><span>拉伸</span></span><i class="sep m7"></i>
          <span class="t off m5"><svg class="i"><use href="#grip2"/></svg><span>设置夹点</span></span>
        </div>
      </div>

      <div class="tbar r3">
        <div class="grp g31">
          <i class="grip"></i>
          <span class="dd d59"><span>基础层</span><i class="c"></i></span>
          <span class="dd d71"><span>基础</span><i class="c"></i></span>
          <span class="dd d71"><span>桩承台</span><i class="c"></i></span>
          <span class="dd d71"><span>CT-119</span><i class="c"></i></span>
          <span class="dd d71"><span>整体</span><i class="c"></i></span>
          <i class="sep m3"></i>
          <span class="t m4"><svg class="i"><use href="#attr"/></svg><span>属性</span></span>
          <span class="t hl hl2 m4"><svg class="i"><use href="#edit"/></svg><span>编辑钢筋</span></span>
          <span class="t m4"><svg class="i"><use href="#list"/></svg><span>构件列表</span></span>
          <span class="t m7"><svg class="i"><use href="#pick"/></svg><span>拾取构件</span></span>
        </div>
        <div class="grp g32">
          <i class="grip"></i>
          <span class="t m6"><svg class="i"><use href="#two"/></svg><span>两点</span></span>
          <span class="t m7"><svg class="i"><use href="#par"/></svg><span>平行</span></span>
          <span class="t m7"><svg class="i"><use href="#ang"/></svg><span>点角</span></span><i class="c m6"></i>
          <span class="t m7"><svg class="i"><use href="#arc3"/></svg><span>三点辅轴</span></span><i class="c m6"></i>
          <span class="t m7"><svg class="i"><use href="#delax"/></svg><span>删除辅轴</span></span>
          <span class="t m7"><svg class="i"><use href="#dim"/></svg><span>尺寸标注</span></span><i class="c m6"></i>
        </div>
      </div>

      <div class="tbar r4">
        <div class="grp g41">
          <i class="grip"></i>
          <span class="t m3"><svg class="i"><use href="#arrow"/></svg><span>选择</span></span><i class="c m6"></i><i class="sep m7"></i>
          <span class="t m5"><svg class="i"><use href="#pt"/></svg><span>点</span></span>
          <span class="t m7"><svg class="i"><use href="#rpt"/></svg><span>旋转点</span></span><i class="sep m7"></i>
          <span class="t off m5"><svg class="i"><use href="#ln"/></svg><span>直线</span></span>
          <span class="t off m7"><svg class="i"><use href="#arc"/></svg><span>三点画弧</span></span><i class="c m6 gray"></i>
          <span class="combo m5"><i class="c"></i></span>
          <span class="t off m6"><i class="rectbox"></i><span>矩形</span></span><i class="sep m6"></i>
          <span class="t m5"><svg class="i"><use href="#smart"/></svg><span>智能布置</span></span><i class="c m5"></i><i class="sep m5"></i>
          <span class="t off m4"><svg class="i"><use href="#adj"/></svg><span>调整钢筋方向</span></span>
          <span class="t off m7"><svg class="i"><use href="#adj"/></svg><span>编辑承台加强筋</span></span>
          <span class="t m7"><svg class="i"><use href="#qry"/></svg><span>查改标注</span></span><i class="c m6"></i>
          <span class="t m7"><svg class="i"><use href="#app"/></svg><span>应用到同名承台</span></span>
          <span class="t m7"><svg class="i"><use href="#hand"/></svg><span>调整承台放坡</span></span>
        </div>
        <div class="grp g42"><i class="grip"></i></div>
      </div>

      <div class="canvas">
        <svg class="scene" viewBox="173 168 1193 305" width="1193" height="305">
          <polygon points="470,168 541,168 518,182" fill="#3e3e00"/>
          <g class="red">
            <path d="M173 235L180 236M346 244L473 256L580 273L740 305"/>
            <path d="M346 260L1213 473" class="redb"/>
            <path d="M346 348L473 376L620 415"/>
            <path d="M286 348L612 429"/>
            <path d="M173 430L350 471"/>
            <path d="M173 305L180 306M173 321L180 322"/>
            <path d="M173 371L393 168M173 408L434 168M173 423L450 168"/>
            <path d="M562 473L622 415L694 347L740 307L788 262L846 208L690 168" class="redt"/>
          </g>
          <g class="grn">
            <path d="M744 307L902 347L1065 386L1242 431L1366 461"/>
            <path d="M893 331L912 364M1056 368L1075 404"/>
            <path d="M1065 386L972 473M902 347L767 472M1366 441L1330 473M847 203L886 168"/>
            <path d="M1185 416L1228 426M1185 417L1228 427"/>
            <circle cx="420" cy="181" r="12"/><circle cx="733" cy="180" r="12"/><circle cx="875" cy="180" r="12"/><circle cx="1241" cy="430" r="12"/><circle cx="178" cy="219" r="13"/>
          </g>
          <g id="mesh-back" class="bar"></g>
          <g id="mesh-floor" class="bar"></g>
          <g id="mesh-front" class="bar"></g>
          <g class="box">
            <path d="M547 168L450 248L458 388L761 463L756 322L450 248M756 322L920 168M761 463L937 301L928 168M458 388L631 227L627 168M631 227L937 301"/>
          </g>
          <ellipse cx="768" cy="320" rx="133" ry="136" class="ring"/>
          <circle cx="769" cy="185" r="8" class="ring"/>
          <g class="lab">
            <text x="420" y="186" text-anchor="middle">7</text>
            <text x="733" y="185" text-anchor="middle">5</text>
            <text x="875" y="185" text-anchor="middle">8</text>
            <text x="1241" y="435" text-anchor="middle">C</text>
            <text x="830" y="456" transform="rotate(90 830 456)">00</text>
          </g>
          <g class="gizmo">
            <path d="M228 423L226 392" stroke="#0a78ff" stroke-width="4"/><path d="M226 380l-4 14h8z" fill="#0a78ff"/>
            <path d="M228 423L247 405" stroke="#1eff1e" stroke-width="3"/><path d="M253 400l-11 3 5 6z" fill="#1eff1e"/>
            <path d="M228 423L260 431" stroke="#ff0000" stroke-width="4"/><path d="M271 434l-14-6-1 9z" fill="#ff0000"/>
            <text x="214" y="384" fill="#0a78ff" class="axt">Z</text>
            <text x="255" y="411" fill="#1eff1e" class="axt">Y</text>
            <text x="267" y="430" fill="#ff2020" class="axt">X</text>
          </g>
        </svg>
        <div class="ctrl">
          <div class="ctrl-head">钢筋显示控制面板</div>
          <div class="ctrl-body">
            <label class="ck"><i class="box-ck"></i>横向底筋</label>
            <label class="ck"><i class="box-ck"></i>纵向底筋</label>
            <label class="ck"><i class="box-ck"></i>显示其它图元</label>
            <label class="ck"><i class="box-ck"></i>显示详细公式</label>
          </div>
        </div>
      </div>

      <div class="tbar r5">
        <div class="grp g51">
          <i class="grip"></i>
          <span class="t m3"><svg class="i"><use href="#orth"/></svg><span>正交</span></span>
          <span class="t hl hl3 m4"><svg class="i"><use href="#snap"/></svg><span>对象捕捉</span></span>
          <span class="t m3"><svg class="i"><use href="#dyn"/></svg><span>动态输入</span></span>
        </div>
        <div class="grp g52">
          <i class="grip"></i>
          <span class="t m5"><svg class="i"><use href="#xp"/></svg><span>交点</span></span>
          <span class="t hl hl4 m4"><svg class="i"><use href="#perp"/></svg><span>垂点</span></span>
          <span class="t hl hl4"><svg class="i"><use href="#mid"/></svg><span>中点</span></span>
          <span class="t m2"><svg class="i"><use href="#vtx"/></svg><span>顶点</span></span>
          <span class="t m7"><svg class="i"><use href="#crd"/></svg><span>坐标</span></span>
        </div>
        <div class="grp g53">
          <i class="grip"></i>
          <span class="dd d60"><span>不偏移</span><i class="c"></i></span>
          <i class="sep m4"></i><span class="dim m2">X=</span>
          <span class="num m4 n58"><span>0</span><span class="spin"><i class="su"></i><i class="sd"></i></span></span><span class="dim m2">mm</span>
          <span class="dim m6">Y=</span>
          <span class="num m4 n58"><span>0</span><span class="spin"><i class="su"></i><i class="sd"></i></span></span><span class="dim m2">mm</span>
          <i class="sep m6"></i><i class="cb m3"></i><span class="lbl m8">旋转</span>
          <span class="num m4 n68"><span>0.000</span><span class="spin"><i class="su"></i><i class="sd"></i></span></span><span class="dim m4">°</span>
        </div>
      </div>

      <div class="lower">
        <div class="dots">
          <svg class="redbox" viewBox="0 0 11 11"><rect x=".5" y=".5" width="10" height="10" fill="#eee" stroke="#666"/><path d="M1 1l9 9M10 1l-9 9" stroke="#8a4a4a"/></svg>
        </div>
        <div class="gridpane">
          <div class="gtool">
            <svg class="i"><use href="#first"/></svg>
            <svg class="i m8"><use href="#prev"/></svg>
            <svg class="i m9"><use href="#next"/></svg>
            <svg class="i m9"><use href="#last"/></svg>
            <i class="sep m6"></i>
            <svg class="i m3"><use href="#up"/></svg>
            <svg class="i m8"><use href="#down"/></svg>
            <i class="sep m7"></i>
            <span class="t off m5"><svg class="i"><use href="#ins"/></svg><span>插入</span></span>
            <span class="t off m7"><svg class="i"><use href="#dlr"/></svg><span>删除</span></span>
            <span class="t m7"><svg class="i"><use href="#scale"/></svg><span>缩尺配筋</span></span>
            <span class="t m7"><svg class="i"><use href="#info"/></svg><span>钢筋信息</span></span>
            <span class="t m7"><svg class="i"><use href="#lib"/></svg><span>钢筋图库</span></span>
            <span class="t m7"><svg class="i"><use href="#oth"/></svg><span>其他</span></span><i class="c m2"></i>
            <span class="m8">关闭</span><i class="sep m9"></i>
            <span class="m6">单构件钢筋总重(kg)：584.64</span>
          </div>
          <div class="tablewrap">
            <div class="tableclip">
              <table class="rebar">
                <colgroup>
                  <col class="c33"><col class="c72"><col class="c56"><col class="c37"><col class="c32"><col class="c234"><col class="c227"><col class="c155"><col class="c62"><col class="c38"><col class="c39"><col class="c49"><col class="c60"><col class="c61"><col class="c74">
                </colgroup>
                <thead>
                  <tr><th></th><th>筋号</th><th>直径<i>(mm)</i></th><th>级别</th><th>图号</th><th class="shape-h">图形</th><th>计算公式</th><th>公式描述</th><th>长度<i>(mm)</i></th><th>根数</th><th>搭接</th><th>损耗<i>(%)</i></th><th>单重<i>(kg)</i></th><th>总重<i>(kg)</i></th><th>钢筋归类</th></tr>
                </thead>
                <tbody>
                  <tr class="on">
                    <td class="rh rh-sel">1*</td><td>横向底筋<i>.1</i></td><td class="bk"><i>18</i></td><td class="ctr">
                      <svg class="grade" viewBox="0 0 11 11"><path d="M5.500 1v9M1 10h9M2 3h7v4H2z" fill="none" stroke="#000"/></svg></td><td><i>63</i></td>
                    <td class="shape sel-shape"><div class="sh"><span class="sh-n">1160</span><span class="sh-u">2720</span></div></td>
                    <td><i>1160+2800-2*40+1160</i></td><td class="desc">设定弯折+净长-两倍保护层+<br>设定弯折</td><td><i>5040</i></td><td><i>29</i></td><td><i>0</i></td><td><i>0</i></td><td><i>10.08</i></td><td><i>292.32</i></td><td>直筋</td>
                  </tr>
                  <tr class="on">
                    <td class="rh">2</td><td>纵向底筋<i>.1</i></td><td class="bk"><i>18</i></td><td class="ctr">
                      <svg class="grade" viewBox="0 0 11 11"><path d="M5.500 1v9M1 10h9M2 3h7v4H2z" fill="none" stroke="#000"/></svg></td><td><i>63</i></td>
                    <td class="shape"><div class="sh"><span class="sh-n">1160</span><span class="sh-u">2720</span></div></td>
                    <td><i>1160+2800-2*40+1160</i></td><td class="desc">设定弯折+净长-两倍保护层+<br>设定弯折</td><td><i>5040</i></td><td><i>29</i></td><td><i>0</i></td><td><i>0</i></td><td><i>10.08</i></td><td><i>292.32</i></td><td>直筋</td>
                  </tr>
                  <tr class="empty">
                    <td class="rh">3</td><td></td><td class="bk"></td><td></td><td></td><td></td><td></td><td></td><td></td><td></td><td></td><td></td><td></td><td></td><td></td>
                  </tr>
                </tbody>
              </table>
            </div>
            <div class="hbar2"><i class="arrow-l"></i><div class="hthumb2"></div></div>
          </div>
        </div>
      </div>
    </section>
  </div>

  <footer class="status">
    <span class="st s147"><i>X=279277 Y=17281</i></span>
    <span class="st s77">层高<i>:2.15m</i></span>
    <span class="st s97">底标高<i>:-2.2m</i></span>
    <span class="st s48"><i>1(1)</i></span>
    <span class="st grow"></span>
    <span class="st s70"><i>84.8 FPS</i></span>
  </footer>

  <div class="taskbar">
    <div class="start"><svg class="winlogo" viewBox="0 0 16 16"><path d="M0 2l7-1v6.500H0zM8 1l8-1v7.500H8zM0 8.500h7V15l-7-1zM8 8.500h8V16l-8-1z" fill="#fff"/></svg></div>
    <div class="search">
      <i class="cortana"></i><span class="stext">在这里输入你要搜索的内容</span>
      <svg class="mic" viewBox="0 0 12 18"><rect x="3" y="0" width="6" height="11" rx="3" fill="none" stroke="#999"/><path d="M1 8c0 6 10 6 10 0M6 14v3M3 17h6" fill="none" stroke="#999"/></svg>
    </div>
    <span class="ti w49"><svg class="ti-i" viewBox="0 0 24 24"><path d="M7 3h10v18H7z" fill="none" stroke="#fff" stroke-width="1.400"/><path d="M5 6H2v12h3M19 6h3v12h-3" fill="none" stroke="#fff"/></svg></span>
    <span class="ti w51"><svg class="ti-i" viewBox="0 0 24 24"><path d="M12 12C5 12 3 8 4 4s8-3 8 1zM12 12c0-7 4-9 8-8s3 8-1 8zM12 12c7 0 9 4 8 8s-8 3-8-1zM12 12c0 7-4 9-8 8s-3-8 1-8z" fill="#e0e0e0"/></svg></span>
    <span class="ti w51"><svg class="ti-i" viewBox="0 0 24 24"><path d="M5 13h14c0-5-3-8-7-8s-7 3-7 8c0 5 3 8 7 8 3 0 5-1 6-4" fill="none" stroke="#e8e8e8" stroke-width="2.600"/><path d="M4 21c-2-3 9-17 17-18" fill="none" stroke="#ccc"/></svg></span>
    <span class="ti w51"><svg class="ti-i" viewBox="0 0 24 24"><path d="M19 5C11 1 4 6 4 13s7 9 12 7 5-9 0-10-7 4-4 6" fill="none" stroke="#ccc" stroke-width="1.500"/></svg></span>
    <span class="ti w48"><svg class="ti-i" viewBox="0 0 24 24"><path d="M4 14h16c0-6-3-10-8-10-6 0-9 5-9 10s4 8 9 8c3 0 6-1 7-3v-3c-2 2-4 3-7 3-3 0-5-2-5-5z" fill="#1f7fdd"/></svg></span>
    <span class="ti w44"><svg class="ti-i" viewBox="0 0 24 24"><path d="M4 14h16c0-6-3-10-8-10s-8 4-8 10 3 8 8 8c3 0 6-2 7-5" fill="none" stroke="#3ea0ee" stroke-width="3"/><ellipse cx="12" cy="12" rx="12" ry="5" transform="rotate(-40 12 12)" fill="none" stroke="#e8c43a" stroke-width="1.500"/></svg></span>
    <span class="ti w45 run r36"><svg class="ti-i" viewBox="0 0 24 24"><path d="M1 4h9l2 2h11v15H1z" fill="#f6d365"/><path d="M1 9h22v12H1z" fill="#fbe39a"/><rect x="8" y="14" width="8" height="7" fill="#3e9be0"/></svg></span>
    <span class="ti w46 run r38"><svg class="ti-i" viewBox="0 0 24 24"><circle cx="12" cy="12" r="10" fill="#8fd14f" stroke="#e8f5d8" stroke-width="2"/><path d="M6 12h12M8 8h8M8 16h8" stroke="#fff" stroke-width="2"/><path d="M6 3c6-3 10-2 13 2" fill="none" stroke="#4a9a2a"/></svg></span>
    <span class="ti w44 run r38"><svg class="ti-i" viewBox="0 0 24 24"><path d="M20 4C10 0 3 8 5 15s12 8 14 1-7-8-9-2" fill="none" stroke="#1f8fe8" stroke-width="4"/></svg></span>
    <span class="ti w46 active"><svg class="ti-i" viewBox="0 0 24 24"><rect width="24" height="24" rx="4" fill="#0f86e8"/><path d="M12 4v12M5 11c0 7 14 7 14 0M4 11h3M17 11h3" fill="none" stroke="#fff" stroke-width="2"/></svg></span>
    <span class="ti w43 run r35"><svg class="ti-i" viewBox="0 0 24 24"><rect width="24" height="24" rx="2" fill="#f0a020"/><path d="M5 6l12-2 2 14-12 2z" fill="#fdf3d0"/><path d="M8 9h7M8 12h7M8 15h5" stroke="#a06020"/><path d="M14 14L22 1" stroke="#b06a10" stroke-width="2"/></svg></span>
    <span class="tt link">链接</span>
    <span class="tt cpu"><span>60%</span><span>CPU使用</span></span>
    <svg class="tray tr17" viewBox="0 0 16 16"><path d="M2 11l6-6 6 6" fill="none" stroke="#fff" stroke-width="1.200"/></svg>
    <svg class="tray tr8" viewBox="0 0 16 16"><path d="M8 1C5 1 4 4 4 7c0 3-1 4-2 6h12c-1-2-2-3-2-6 0-3-1-6-4-6zM6 14h4l-2 2z" fill="#fff"/></svg>
    <svg class="tray tr8" viewBox="0 0 16 16"><rect x="3" y="6" width="12" height="8" fill="#bbb" stroke="#fff"/><path d="M0 3h5M2 1v5M9 3h5" stroke="#fff"/></svg>
    <svg class="tray tr9" viewBox="0 0 16 16"><path d="M1 15a14 14 0 0 1 14-14M4 15a11 11 0 0 1 11-11M7 15a8 8 0 0 1 8-8" fill="none" stroke="#ccc"/><circle cx="11" cy="12" r="2" fill="#fff"/></svg>
    <svg class="tray tr6" viewBox="0 0 16 16"><path d="M1 6h3l4-4v12l-4-4H1z" fill="none" stroke="#fff"/><path d="M10 5c2 2 2 4 0 6M12 3c3 3 3 7 0 10" fill="none" stroke="#ccc"/></svg>
    <svg class="tray kbd tr9" viewBox="0 0 22 16"><rect x=".5" y="1.500" width="21" height="13" fill="none" stroke="#fff"/><path d="M3 5h16M3 8h16M6 11h10" stroke="#fff" stroke-dasharray="1 1"/></svg>
    <span class="tt zh">中</span>
    <svg class="tray tr14" viewBox="0 0 16 18"><path d="M1 2l13-2 2 15-13 3z" fill="#f05a22"/><path d="M11 5C9 3 5 4 5 6c0 3 6 2 6 5s-4 3-6 1" fill="none" stroke="#fff" stroke-width="2"/></svg>
    <span class="tt clock"><span>17:53</span><span>2018/7/23</span></span>
    <svg class="tray note" viewBox="0 0 20 20"><path d="M2 2h16v13h-6l-2 3-2-3H2z" fill="none" stroke="#fff" stroke-width="1.200"/></svg>
  </div>
</div>
<script src="script.js"></script>
</body>
</html>
```
FILE: styles.css
```css
*{box-sizing:border-box}
html,body{margin:0;padding:0;overflow:hidden}
body{width:1366px;height:768px;background:#f0f0f0;color:#000;font:12px/1.2 "Noto Sans CJK SC","Liberation Sans",sans-serif}
i{font-style:normal}
ul{list-style:none;margin:0;padding:0}
.defs{width:0;height:0;position:absolute}
.app{display:flex;flex-direction:column;width:1366px;height:768px}

.m2{margin-left:2px}.m3{margin-left:3px}.m4{margin-left:4px}.m5{margin-left:5px}.m6{margin-left:6px}.m7{margin-left:7px}.m8{margin-left:8px}.m9{margin-left:9px}.m12{margin-left:12px}.m18{margin-left:18px}

.i{width:16px;height:16px;flex:none;display:block}
.t{display:inline-flex;align-items:center;flex:none;white-space:nowrap}
.t>.i,.t>.sigma{margin-right:4px}
.off{color:#8f8f8f}
.sep{display:block;flex:none;width:1px;height:18px;background:#b5b5b5}
.c{display:block;flex:none;width:6px;height:4px;border-style:solid;border-width:4px 3px 0;border-color:#222 transparent transparent}
.c.gray{border-top-color:#999}
.grip{display:block;flex:none;width:3px;height:15px;margin-left:1px;background:repeating-linear-gradient(#b5b5b5 0 2px,transparent 2px 4px)}
.more{font:bold 11px "Liberation Sans",sans-serif;flex:none;width:8px;color:#222}
.push{margin-left:auto}
.grp{display:flex;align-items:center;height:100%;background:#f8f8f8;border-radius:2px}
.hl{background:#dcecfa;border:1px solid #0f7fd8}
.sigma{display:inline-block;width:16px;text-align:center;font:bold 15px "Liberation Serif",serif}
.lbl{flex:none;white-space:nowrap}

.title{position:relative;display:flex;align-items:center;height:23px;background:#fff;flex:none;padding-left:2px}
.logo{width:16px;height:16px;flex:none}
.title-text{margin-left:4px;white-space:nowrap;font-size:12px;letter-spacing:.38px;color:#111}
.winbtns{margin-left:auto;display:flex;align-items:center;gap:34px;padding-right:19px}
.wb{width:12px;height:12px;display:block}
.badge{position:absolute;left:782px;top:-22px;width:41px;height:41px;border-radius:50%;background:#45ad4c;border:1px solid #9fb39f;box-shadow:0 1px 2px #888;color:#fff;font:bold 12px/12px "Liberation Sans",sans-serif;text-align:center;padding-top:23px}
.ime{position:absolute;left:968px;top:3px;width:207px;height:23px;display:flex;align-items:center;z-index:3}
.ime::before{content:"";position:absolute;left:17px;right:0;top:0;bottom:0;background:#f4f7fb;border:1px solid #b3c8dd;z-index:-1}
.ime-s{width:28px;height:26px;flex:none}
.ime-en{color:#1b72b8;font-weight:700;font-size:14px;margin-left:6px;width:16px}
.ime-i1{width:8px;height:11px;margin:0 9px 0 7px;flex:none}
.ime-i{width:16px;height:16px;margin-right:6px;flex:none}

.menu{display:flex;align-items:center;height:30px;background:#f8f8f8;flex:none;padding-left:7px}
.mi{margin-right:10px;flex:none;white-space:nowrap}
.mr8{margin-right:8px}.mr12{margin-right:12px}.mr13{margin-right:13px}
.ask{margin-left:7px;width:190px;height:27px;background:#fbfbfb;color:#17656e;display:flex;align-items:center;padding-left:33px;border-radius:3px}
.user{margin-left:3px}
.phone{margin-left:4px;font-size:13px;letter-spacing:-.05px}
.end{margin-left:auto;margin-right:4px}

.row1{display:flex;height:30px;padding:1px 0 3px 2px;flex:none}
.g1{width:146px;padding-left:4px}
.g2{width:552px;margin-left:3px;padding:0 4px 0 6px}
.g3{flex:1;margin-left:3px;padding:0 4px 0 0}
.white3d{background:#fff;display:flex;align-items:center;height:100%;width:49px}
.hl1{width:75px;height:24px;padding-left:3px}
.hl1>.i{margin-right:3px}

.main{display:flex;height:625px;flex:none}
.side{width:168px;padding-top:1px;flex:none;margin-right:5px}
.side-head{height:15px;background:#0660e8;color:#fff;font-size:13px;line-height:15px;display:flex;justify-content:space-between;white-space:nowrap;margin-bottom:1px}
.pin{display:flex;align-items:center;gap:6px;padding-right:5px}
.pinpic{width:10px;height:12px;display:block}
.side-btn{height:22px;margin:0 1px 1px 1px;background:#efefef;border:1px solid #b5b5b5;text-align:center;line-height:20px;font-size:13px}
.navbox{height:514px;margin:0 1px 1px 1px;padding:1px 0 1px 1px;background:#f7f7f7;border:1px solid #c8c8c8;display:flex;flex-direction:column}
.expand{height:21px;display:flex;align-items:center;gap:8px;padding-left:2px;flex:none}
.ex{width:16px;height:16px;display:block}
.treebox{margin-top:3px;height:488px;background:#fff;border:1px solid #9f9f9f;border-width:1px 2px 2px 1px;display:flex;flex-direction:column;flex:none}
.treeclip{flex:1;display:flex;overflow:hidden;min-height:0}
.lv1{width:134px;height:100%;overflow:hidden;flex:none;margin-left:11px;padding-top:1px;border-left:1px dotted #777}
.lv2{margin-left:19px}
.lv2>li{display:flex;height:16px;align-items:center;padding-left:1px;white-space:nowrap;background:repeating-linear-gradient(#777 0 1px,transparent 1px 2px) 0 0/1px 100% no-repeat}
.lv2>li:last-child{background-size:1px 8px}
.dash{display:block;width:7px;height:1px;flex:none;background:repeating-linear-gradient(90deg,#777 0 1px,transparent 1px 2px)}
.dash2{display:block;width:6px;height:1px;flex:none;background:repeating-linear-gradient(90deg,#777 0 1px,transparent 1px 2px)}
.item{display:flex;align-items:center;height:16px;padding:0 2px 0 3px;flex:none}
.item>.i{margin-right:4px}
.item i,.rebar i,.st i{font:10px "DejaVu Sans Mono","Liberation Mono",monospace}
.sel{background:#d9d9d9}
.fo{display:flex;align-items:center;height:16px;margin-left:-6px}
.fo>.i{margin-right:5px}
.cv{display:block;width:10px;height:10px;background:#fff;flex:none;position:relative}
.cv::after{content:"";position:absolute;left:1px;top:0;width:7px;height:7px;border:solid #444;border-width:0 1.6px 1.6px 0;transform:rotate(45deg) scale(.8)}
.vbar{width:15px;flex:none;display:flex;flex-direction:column;align-items:center;height:100%;padding:8px 0 3px}
.vtrack{flex:1;width:100%;padding-top:176px}
.vthumb{height:209px;background:#cdcdcd}
.arrow-up,.arrow-dn,.arrow-l,.arrow-r{display:block;flex:none;width:7px;height:7px;border:solid #555;border-width:2px 0 0 2px}
.arrow-up{transform:rotate(45deg)}
.arrow-dn{transform:rotate(225deg)}
.arrow-l{transform:rotate(-45deg)}
.arrow-r{transform:rotate(135deg)}
.hbar{height:18px;flex:none;display:flex;align-items:center;background:#f0f0f0;padding:0 8px 0 5px}
.hthumb{width:107px;height:100%;background:#cdcdcd;margin:0 8px 0 5px}

.work{width:1193px;padding-top:1px;display:flex;flex-direction:column;flex:none}
.tbar{display:flex;flex:none;padding-left:4px}
.r2{height:24px}
.r3{height:28px;margin-top:2px}
.r4{height:26px;margin-top:2px}
.r5{height:27px;margin-top:2px;padding-left:3px}
.g21{width:787px}
.g31{width:635px}
.g32{width:422px;margin-left:2px}
.g41{width:1031px}
.g42{width:30px;margin-left:2px;padding-left:3px}
.dd{display:flex;align-items:center;justify-content:space-between;flex:none;height:24px;background:#fff;padding:0 4px 0 2px;margin-left:1px}
.d59{width:59px}.d71{width:71px}.d60{width:60px}
.hl2{width:74px;height:24px;padding-left:3px}
.hl2>.i{margin-right:2px}
.combo{display:flex;align-items:center;justify-content:flex-end;width:55px;height:21px;border:1px solid #777;background:#f6f6f6;padding-right:4px;flex:none}
.rectbox{display:block;width:14px;height:14px;background:#e9e9e9;border:1px solid #ccc;margin:0 6px 0 0;flex:none}

.canvas{position:relative;height:305px;margin-top:2px;background:#000;overflow:hidden;flex:none}
.scene{display:block}
.red path{fill:none;stroke:#e80000;stroke-width:1}
.red .redb{stroke:#ff0000;stroke-width:1.2}
.red .redt{stroke:#c80000;stroke-width:.9}
.grn path,.grn circle{fill:none;stroke:#0a8a0a;stroke-width:1}
.bar line{stroke:#a8988f;stroke-width:1.5}
.box path{fill:none;stroke:#9a9a9a;stroke-width:1.2}
.ring{fill:none;stroke:#6e6e6e;stroke-width:.8}
.lab text{fill:#ddd;font:14px "Liberation Sans",sans-serif}
.gizmo path{fill-rule:nonzero}
.axt{font:14px "Liberation Sans",sans-serif}
.ctrl{position:absolute;left:7px;top:3px;width:166px;height:177px;background:#fff;border:1px solid #555}
.ctrl-head{height:30px;color:#aaa;padding:6px 0 0 7px;font-size:12px}
.ctrl-body{height:145px;border:2px solid #8b9096;padding:0 0 0 2px}
.ck{display:flex;align-items:center;height:12px;line-height:12px;color:#000;white-space:nowrap;font-size:12px}
.box-ck{display:block;position:relative;width:11px;height:11px;border:1px solid #999;background:#fff;margin-right:4px;flex:none}
.box-ck::after{content:"";position:absolute;left:3px;top:0;width:4px;height:7px;border:solid #444;border-width:0 1.4px 1.4px 0;transform:rotate(40deg)}

.g51{width:207px}
.g52{width:265px;margin-left:2px}
.g53{width:408px;margin-left:2px}
.hl3{width:75px;height:22px;padding-left:3px}
.hl3>.i{margin-right:3px}
.hl4{width:51px;height:22px;padding-left:3px}
.hl4>.i{margin-right:3px}
.dim{color:#777;flex:none;white-space:nowrap}
.num{display:flex;align-items:center;justify-content:flex-end;height:23px;border:1px solid #666;background:#f6f6f6;color:#777;font:13px "Liberation Sans",sans-serif;padding-right:3px;flex:none;gap:8px}
.n58{width:58px}.n68{width:68px}
.spin{display:flex;flex-direction:column;gap:5px}
.su,.sd{display:block;width:0;height:0;border:solid transparent;border-width:0 3px}
.su{border-bottom:4px solid #777}
.sd{border-top:4px solid #777}
.cb{display:block;width:11px;height:11px;border:1px solid #888;background:#fff;flex:none}

.lower{display:flex;margin-top:5px;height:200px;flex:none}
.dots{width:14px;flex:none;background:repeating-linear-gradient(#c4c4c4 0 2px,transparent 2px 5px) 3px 13px/2px 100% no-repeat,repeating-linear-gradient(#c4c4c4 0 2px,transparent 2px 5px) 7px 13px/2px 100% no-repeat}
.redbox{width:11px;height:11px;display:block;margin-left:2px}
.gridpane{flex:1;min-width:0;display:flex;flex-direction:column}
.gtool{height:26px;display:flex;align-items:center;background:#f8f8f8;flex:none;white-space:nowrap}
.tablewrap{flex:1;min-height:0;display:flex;flex-direction:column;background:#fff;border:1px solid #b5b5b5;border-width:1px 0 1px 1px;margin-left:-1px}
.tableclip{flex:1;min-height:0;overflow:hidden;padding-top:1px}
.rebar{border-collapse:collapse;table-layout:fixed;width:1229px}
.c33{width:33px}.c72{width:72px}.c56{width:56px}.c37{width:37px}.c32{width:32px}.c234{width:234px}.c227{width:227px}.c155{width:155px}.c62{width:62px}.c38{width:38px}.c39{width:39px}.c49{width:49px}.c60{width:60px}.c61{width:61px}.c74{width:74px}
.rebar th,.rebar td{border:1px solid #c0c0c0;padding:0;overflow:hidden;white-space:nowrap;font-weight:400}
.rebar thead tr{height:19px}
.rebar th{background:linear-gradient(#fff,#f3f3f3);text-align:center;font-size:12px}
.rebar .shape-h{background:linear-gradient(#fbe3ad,#f3c566);color:#5b0a7a}
.rebar tbody td{padding-left:2px}
.rebar .on{height:34px;background:#c9fdd4}
.rebar .empty{height:19px}
.rebar .rh{background:#fafafa;text-align:center;padding-left:0}
.rebar .rh-sel{background:#fdd089;color:#600060}
.rebar .bk{border-left:1px solid #000}
.rebar .ctr{text-align:center;padding-left:0}
.grade{width:11px;height:11px;display:inline-block;vertical-align:middle}
.rebar .sel-shape{background:#a9e9d6}
.sh{display:flex;align-items:center;position:relative;height:22px}
.sh-n{color:#f00;font:11.500px "Liberation Sans",sans-serif;margin:0 0 0 25px;width:30px}
.sh-u{width:120px;height:15px;border:solid #000;border-width:0 2px 2px;text-align:center;font:11px/12px "Liberation Sans",sans-serif;margin-top:-4px}
.desc{line-height:12px;white-space:normal}
.hbar2{height:15px;flex:none;display:flex;align-items:center;background:#f0f0f0;padding-left:7px;margin-bottom:3px}
.hthumb2{width:758px;height:100%;background:#cdcdcd;margin-left:5px}

.status{display:flex;height:20px;gap:3px;flex:none;background:#f0f0f0}
.st{height:19px;display:flex;align-items:center;background:#f2f2f2;border:1px solid #e0e0e0;padding-left:1px;white-space:nowrap}
.s147{width:147px}.s77{width:77px}.s97{width:97px}.s48{width:48px}.s70{width:68px}
.grow{flex:1}

.taskbar{display:flex;align-items:center;height:40px;background:#020d14;color:#fff;flex:none}
.start{width:48px;height:40px;background:#000;display:flex;align-items:center;justify-content:center;flex:none}
.winlogo{width:16px;height:16px;display:block}
.search{display:flex;align-items:center;width:344px;height:40px;background:#333;flex:none;padding-left:9px;font-size:14px;color:#999}
.cortana{display:block;width:20px;height:20px;border:3px solid #eee;border-radius:50%;flex:none}
.stext{margin-left:7px;font-size:14px}
.mic{width:12px;height:18px;margin-left:auto;margin-right:14px;display:block}
.ti{display:flex;align-items:center;justify-content:center;height:40px;flex:none}
.ti-i{width:24px;height:24px;display:block}
.w43{width:43px}.w44{width:44px}.w45{width:45px}.w46{width:46px}.w48{width:48px}.w49{width:49px}.w51{width:51px}
.run{background:linear-gradient(#76b9ed,#76b9ed) center bottom/36px 2px no-repeat}
.active{background:#2e3b40 linear-gradient(#76b9ed,#76b9ed) center bottom/100% 2px no-repeat}
.tt{color:#ddd;flex:none;text-align:center}
.link{margin-left:13px;width:24px;color:#bbb}
.cpu{margin-left:20px;width:50px;display:flex;flex-direction:column;gap:3px;line-height:14px}
.zh{margin-left:10px;width:14px;color:#fff}
.clock{margin-left:5px;width:56px;display:flex;flex-direction:column;gap:3px;line-height:14px}
.tray{width:16px;height:16px;display:block;flex:none}
.tr6{margin-left:6px}.tr8{margin-left:8px}.tr9{margin-left:9px}.tr14{margin-left:14px}.tr17{margin-left:17px}
.kbd{width:22px}
.note{width:20px;height:20px;margin-left:31px}
```
FILE: script.js
```js
(function () {
  var NS = 'http://www.w3.org/2000/svg';
  var L = [465, 382], F = [759, 455], R = [928, 300], B = [631, 227];
  var TL = [453, 254], TF = [757, 328], TR = [918, 168], TB = [620, 94];

  function mix(a, b, t) {
    return [a[0] + (b[0] - a[0]) * t, a[1] + (b[1] - a[1]) * t];
  }
  function line(group, p, q) {
    var el = document.createElementNS(NS, 'line');
    el.setAttribute('x1', p[0].toFixed(1));
    el.setAttribute('y1', p[1].toFixed(1));
    el.setAttribute('x2', q[0].toFixed(1));
    el.setAttribute('y2', q[1].toFixed(1));
    group.appendChild(el);
  }
  function face(group, a, b, c, d, n) {
    for (var i = 0; i <= n; i++) {
      var t = i / n;
      line(group, mix(a, b, t), mix(c, d, t));
    }
  }

  var back = document.getElementById('mesh-back');
  var floor = document.getElementById('mesh-floor');
  var front = document.getElementById('mesh-front');

  face(back, L, B, TL, TB, 28);
  face(back, B, R, TB, TR, 28);
  face(floor, L, B, F, R, 28);
  face(floor, L, F, B, R, 28);
  face(front, L, F, TL, TF, 46);
  face(front, F, R, TF, TR, 46);
})();
```
